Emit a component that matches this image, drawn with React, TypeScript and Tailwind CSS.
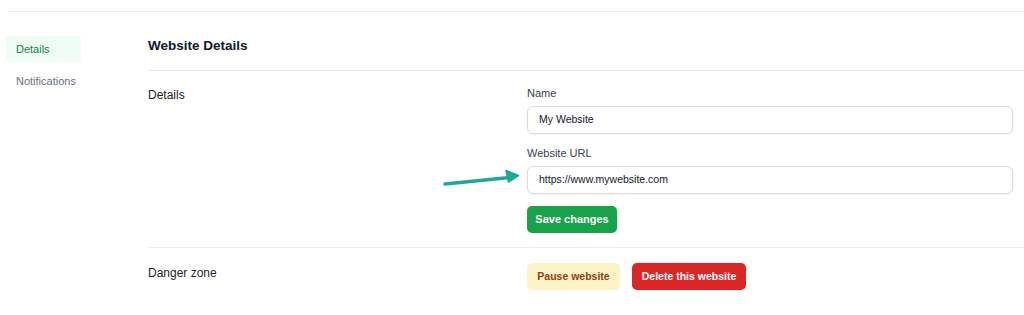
export default function App() {
  return (
    <div className="relative h-[315px] w-full overflow-hidden bg-white font-['Liberation_Sans',Arial,sans-serif] text-[#1f2328]">
      {/* Top rule */}
      <div className="ml-2 mt-[11px] border-t border-[#ececec]" />

      <div className="flex">
        {/* Sidebar */}
        <nav className="flex w-[148px] shrink-0 flex-col gap-[6px] pl-[6px] pt-[24px]">
          <a className="flex h-[26px] w-[75px] items-center rounded-[4px] bg-[#f0fdf4] pl-[10px] text-[11px] text-[#15803d]">
            Details
          </a>
          <a className="flex h-[26px] items-center pl-[10px] text-[11px] text-[#6b7280]">Notifications</a>
        </nav>

        {/* Main */}
        <main className="flex-1">
          <div className="h-[59px] border-b border-[#e8e8e8] pt-[25px]">
            <h1 className="text-[13.5px] font-bold leading-[18px] text-[#111827]">Website Details</h1>
          </div>

          <section className="grid grid-cols-[379px_1fr] border-b border-[#ececec] pb-[14px] pt-[15px]">
            <h2 className="pt-[1px] text-[12px] leading-[16px] text-[#1f2328]">Details</h2>
            <div className="pr-[11px]">
              <label className="mb-[6px] block text-[11px] leading-[14px] text-[#374151]">Name</label>
              <div className="flex h-[28px] items-center rounded-[6px] border border-[#dcdcdc] pl-[11px] text-[10.5px] text-[#111827] shadow-[0_1px_2px_rgba(0,0,0,0.06)]">
                My Website
              </div>
              <label className="mb-[6px] mt-[12px] block text-[11px] leading-[14px] text-[#374151]">
                Website URL
              </label>
              <div className="flex h-[28px] items-center rounded-[6px] border border-[#dcdcdc] pl-[11px] text-[10.5px] text-[#111827] shadow-[0_1px_2px_rgba(0,0,0,0.06)]">
                https://www.mywebsite.com
              </div>
              <button className="mt-[12px] flex h-[27px] w-[90px] items-center justify-center rounded-[5px] bg-[#16a34a] text-[11px] font-bold text-white">
                Save changes
              </button>
            </div>
          </section>

          <section className="grid grid-cols-[379px_1fr] pt-[15px]">
            <h2 className="pt-[2px] text-[12px] leading-[16px] text-[#1f2328]">Danger zone</h2>
            <div className="flex gap-[12px]">
              <button className="flex h-[27px] w-[93px] items-center justify-center rounded-[5px] bg-[#fef3c7] text-[10.5px] font-bold text-[#92400e]">
                Pause website
              </button>
              <button className="flex h-[27px] w-[114px] items-center justify-center rounded-[5px] bg-[#dc2626] text-[10.5px] font-bold text-white">
                Delete this website
              </button>
            </div>
          </section>
        </main>
      </div>

      {/* Annotation arrow */}
      <svg className="absolute left-[440px] top-[166px]" width="84" height="24" viewBox="0 0 84 24" fill="none">
        <path d="M5 18 L70 11.5" stroke="#1ea896" strokeWidth="3.5" strokeLinecap="round" />
        <path d="M66 4.5 L78.5 9.5 L68.5 16 Z" fill="#1ea896" stroke="#1ea896" strokeWidth="1.5" strokeLinejoin="round" />
      </svg>
    </div>
  );
}
